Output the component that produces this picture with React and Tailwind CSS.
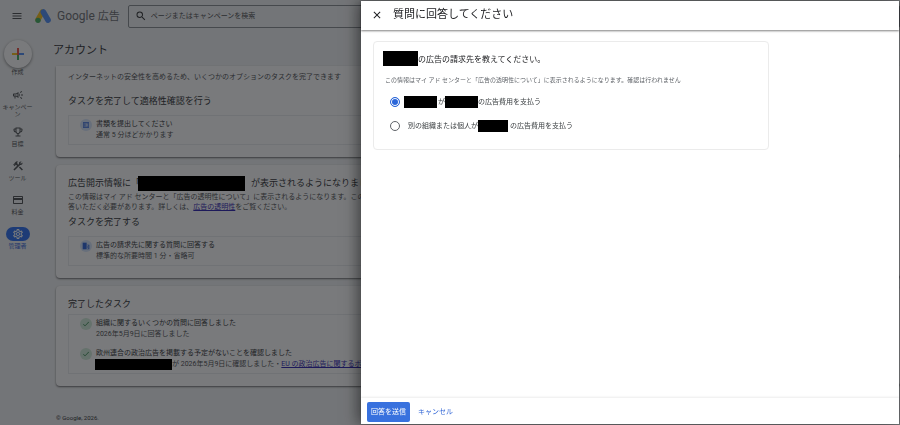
import React, { useState } from 'react';
import {
    MdMenu,
    MdSearch,
    MdOutlineCampaign,
    MdOutlineEmojiEvents,
    MdConstruction,
    MdOutlineCreditCard,
    MdOutlineSettings,
    MdOutlineBallot,
    MdCheck,
    MdClose,
} from 'react-icons/md';

const navItems = [
    { label: 'キャンペーン', icon: MdOutlineCampaign },
    { label: '目標', icon: MdOutlineEmojiEvents },
    { label: 'ツール', icon: MdConstruction },
    { label: '料金', icon: MdOutlineCreditCard },
    { label: '管理者', icon: MdOutlineSettings, active: true },
];

const AdsLogo = () => (
    <svg viewBox="0 0 48 44" className="w-4 h-4" aria-hidden="true">
        <path d="M22 10 L9 33" stroke="#fbbc04" strokeWidth="16" strokeLinecap="round" />
        <path d="M25 10 L39 34" stroke="#4285f4" strokeWidth="17" strokeLinecap="round" />
        <circle cx="9" cy="35" r="8" fill="#34a853" />
    </svg>
);

const PlusIcon = () => (
    <svg viewBox="0 0 12 12" className="w-3 h-3" aria-hidden="true">
        <path d="M5 0h2v7H5z" fill="#ea4335" />
        <path d="M0 5h5v2H0z" fill="#fbbc04" />
        <path d="M7 5h5v2H7z" fill="#4285f4" />
        <path d="M5 7h2v5H5z" fill="#34a853" />
    </svg>
);

const BuildingIcon = ({ className }) => (
    <svg viewBox="0 0 24 24" className={className} fill="currentColor" aria-hidden="true">
        <path d="M2 2h12v20H2z" />
        <path d="M15 8h7v14h-7v-2h4V10h-4z" />
        <path d="M16 12h2v2h-2zM16 16h2v2h-2z" />
    </svg>
);

// black bar over a hidden name, stays above the backdrop
const Redacted = ({ className }) => (
    <span className={`relative z-20 inline-block shrink-0 bg-black ${className}`} />
);

const Card = ({ className = '', children }) => (
    <section className={`bg-white px-3 pb-3 shadow-[0_1px_2px_rgba(0,0,0,0.6)] ${className}`}>{children}</section>
);

const TaskList = ({ children }) => (
    <div className="flex flex-col gap-2 border border-[#e8eaed] px-[11px] py-[3px]">{children}</div>
);

const Task = ({ icon: Icon, done, title, children }) => (
    <div className="flex gap-1">
        <span
            className={`flex items-center justify-center w-3 h-3 shrink-0 rounded-full ${
                done ? 'bg-[#ceead6] text-[#137333]' : 'bg-[#d2e3fc] text-[#1a56d6]'
            }`}
        >
            <Icon className="w-2 h-2" />
        </span>
        <div className="text-[7px] leading-[11px]">
            <p className="text-[#202124]">{title}</p>
            <p className="flex items-center h-[11px] text-[#3c4043]">{children}</p>
        </div>
    </div>
);

const Sidebar = () => (
    <nav className="flex flex-col items-center w-[35px] shrink-0 pt-2 text-[#3c4043]">
        <button
            aria-label="作成"
            className="flex items-center justify-center w-7 h-7 rounded-full bg-white shadow-[0_1px_3px_rgba(0,0,0,0.5)]"
        >
            <PlusIcon />
        </button>
        <span className="text-[6px] leading-[8px]">作成</span>
        <ul className="flex flex-col gap-2 mt-3">
            {navItems.map(({ label, icon: Icon, active }) => (
                <li key={label} className="min-h-[26px]">
                    <a href="#" className={`flex flex-col items-center ${active ? 'text-[#1a56d6]' : ''}`}>
                        <span
                            className={`flex items-center justify-center w-6 h-[14px] rounded-full ${
                                active ? 'bg-[#1a62f0] text-white' : ''
                            }`}
                        >
                            <Icon className="w-3 h-3" />
                        </span>
                        <span className="mt-px w-[31px] text-center text-[6px] leading-[7px]">{label}</span>
                    </a>
                </li>
            ))}
        </ul>
    </nav>
);

const AccountPage = () => (
    <main className="flex-1 min-w-0 pl-[21px] overflow-hidden whitespace-nowrap">
        <h1 className="-ml-[3px] pt-[10px] pb-[6px] text-[11px] leading-[18px] text-[#202124]">アカウント</h1>

        <Card className="pt-1 rounded-b">
            <p className="text-[7px] leading-[14px] text-[#3c4043]">
                インターネットの安全性を高めるため、いくつかのオプションのタスクを完了できます
            </p>
            <h2 className="pt-3 pb-2 text-[9px] leading-[11px] text-[#202124]">タスクを完了して適格性確認を行う</h2>
            <TaskList>
                <Task icon={MdOutlineBallot} title="書類を提出してください">
                    通常 5 分ほどかかります
                </Task>
            </TaskList>
        </Card>

        <Card className="mt-2 pt-[11px] rounded">
            <h2 className="flex items-center h-[15px] text-[9px] text-[#202124]">
                広告開示情報に「
                <Redacted className="w-[107px] h-[15px] -ml-[2px] mr-[6px]" />
                が表示されるようになりました
            </h2>
            <p className="pt-px text-[7px] leading-[10px] text-[#3c4043]">
                この情報はマイ アド センターと「広告の透明性について」に表示されるようになります。この
                <br />
                答いただく必要があります。詳しくは、
                <a href="#" className="underline text-[#1a0dab]">
                    広告の透明性
                </a>
                をご覧ください。
            </p>
            <h2 className="pt-1 pb-2 text-[9px] leading-[12px] text-[#202124]">タスクを完了する</h2>
            <TaskList>
                <Task icon={BuildingIcon} title="広告の請求先に関する質問に回答する">
                    標準的な所要時間 1 分・省略可
                </Task>
            </TaskList>
        </Card>

        <Card className="mt-2 pt-3 rounded">
            <h2 className="pb-1 text-[9px] leading-[12px] text-[#202124]">完了したタスク</h2>
            <TaskList>
                <Task icon={MdCheck} done title="組織に関するいくつかの質問に回答しました">
                    2026年5月9日に回答しました
                </Task>
                <Task icon={MdCheck} done title="欧州連合の政治広告を掲載する予定がないことを確認しました">
                    <Redacted className="w-[77px] h-[11px] -ml-px" />
                    <span>
                        が 2026年5月9日に確認しました・
                        <a href="#" className="underline text-[#1a0dab]">
                            EU の政治広告に関するポリシー
                        </a>
                    </span>
                </Task>
            </TaskList>
        </Card>

        <footer className="pt-7 text-[6px] leading-[8px] text-[#202124]">© Google, 2026.</footer>
    </main>
);

const radioClass =
    'appearance-none w-[10px] h-[10px] shrink-0 rounded-full border border-[#5f6368] bg-white checked:border-[#2a66d9] checked:bg-[#2a66d9] checked:shadow-[inset_0_0_0_1px_white]';

const AnswerDrawer = () => {
    const [payer, setPayer] = useState('self');

    return (
        <div
            role="dialog"
            aria-label="質問に回答してください"
            className="fixed inset-y-px right-px z-30 flex flex-col w-[538px] max-w-full bg-white shadow-[-3px_0_14px_rgba(0,0,0,0.5)]"
        >
            <header className="flex items-center gap-2 h-[29px] shrink-0 px-2 pb-[2px] shadow-[0_1px_2px_rgba(0,0,0,0.5)]">
                <button aria-label="閉じる" className="flex items-center justify-center w-4 h-4 text-[#202124]">
                    <MdClose className="w-3 h-3" />
                </button>
                <h2 className="text-[11px] leading-[16px] text-[#202124]">質問に回答してください</h2>
            </header>

            <div className="flex-1 min-h-0 p-3 pt-[11px]">
                <fieldset className="max-w-[396px] border border-[#ebebeb] rounded px-[9px] pt-[9px] pb-[17px]">
                    <div className="flex items-center h-[15px] text-[8px] leading-[12px] text-[#202124]">
                        <Redacted className="w-[35px] h-[15px]" />
                        <span className="pt-[2px]">の広告の請求先を教えてください。</span>
                    </div>
                    <p className="mt-2 ml-[2px] text-[6px] leading-[12px] text-[#5f6368]">
                        この情報はマイ アド センターと「広告の透明性について」に表示されるようになります。確認は行われません
                    </p>
                    <div className="flex flex-col gap-3 mt-[10px] ml-[7px] text-[7px] text-[#3c4043]">
                        <label className="flex items-center gap-1 h-3">
                            <input
                                type="radio"
                                name="payer"
                                className={radioClass}
                                checked={payer === 'self'}
                                onChange={() => setPayer('self')}
                            />
                            <span className="flex items-center">
                                <Redacted className="w-[33px] h-3 mr-px" />が
                                <Redacted className="w-[33px] h-3" />
                                の広告費用を支払う
                            </span>
                        </label>
                        <label className="flex items-center gap-2 h-3">
                            <input
                                type="radio"
                                name="payer"
                                className={radioClass}
                                checked={payer === 'other'}
                                onChange={() => setPayer('other')}
                            />
                            <span className="flex items-center">
                                別の組織または個人が
                                <Redacted className="w-[30px] h-3 mr-[2px]" />
                                の広告費用を支払う
                            </span>
                        </label>
                    </div>
                </fieldset>
            </div>

            <footer className="flex items-center gap-2 shrink-0 px-[6px] pt-1 pb-[2px] text-[7px] shadow-[0_-1px_2px_rgba(0,0,0,0.08)]">
                <button className="h-5 px-1 rounded-xs bg-[#3871de] text-white">回答を送信</button>
                <button className="h-5 text-[#3367d6]">キャンセル</button>
            </footer>
        </div>
    );
};

const App = () => {
    return (
        <div className="h-screen overflow-hidden bg-[#f1f3f4] font-[Roboto,'Noto_Sans_CJK_JP',sans-serif]">
            <header className="flex items-center h-8 pl-[11px]">
                <button aria-label="メニュー" className="text-[#3c4043]">
                    <MdMenu className="w-3 h-3" />
                </button>
                <a href="#" className="flex items-center ml-3 text-[#5f6368]">
                    <AdsLogo />
                    <span className="ml-[6px] text-[12px] leading-[16px]">
                        Google <span className="text-[11px]">広告</span>
                    </span>
                </a>
                <label className="flex items-center gap-1 flex-1 h-[23px] ml-2 px-[6px] border border-[#80868b] rounded-xs">
                    <MdSearch className="w-3 h-3 text-[#202124]" />
                    <input
                        type="search"
                        aria-label="検索"
                        placeholder="ページまたはキャンペーンを検索"
                        className="flex-1 text-[7px] outline-none placeholder:text-[#3c4043]"
                    />
                </label>
            </header>
            <div className="flex">
                <Sidebar />
                <AccountPage />
            </div>
            <div className="fixed inset-0 z-10 bg-[#202124]/60" />
            <AnswerDrawer />
        </div>
    );
};

export default App;
